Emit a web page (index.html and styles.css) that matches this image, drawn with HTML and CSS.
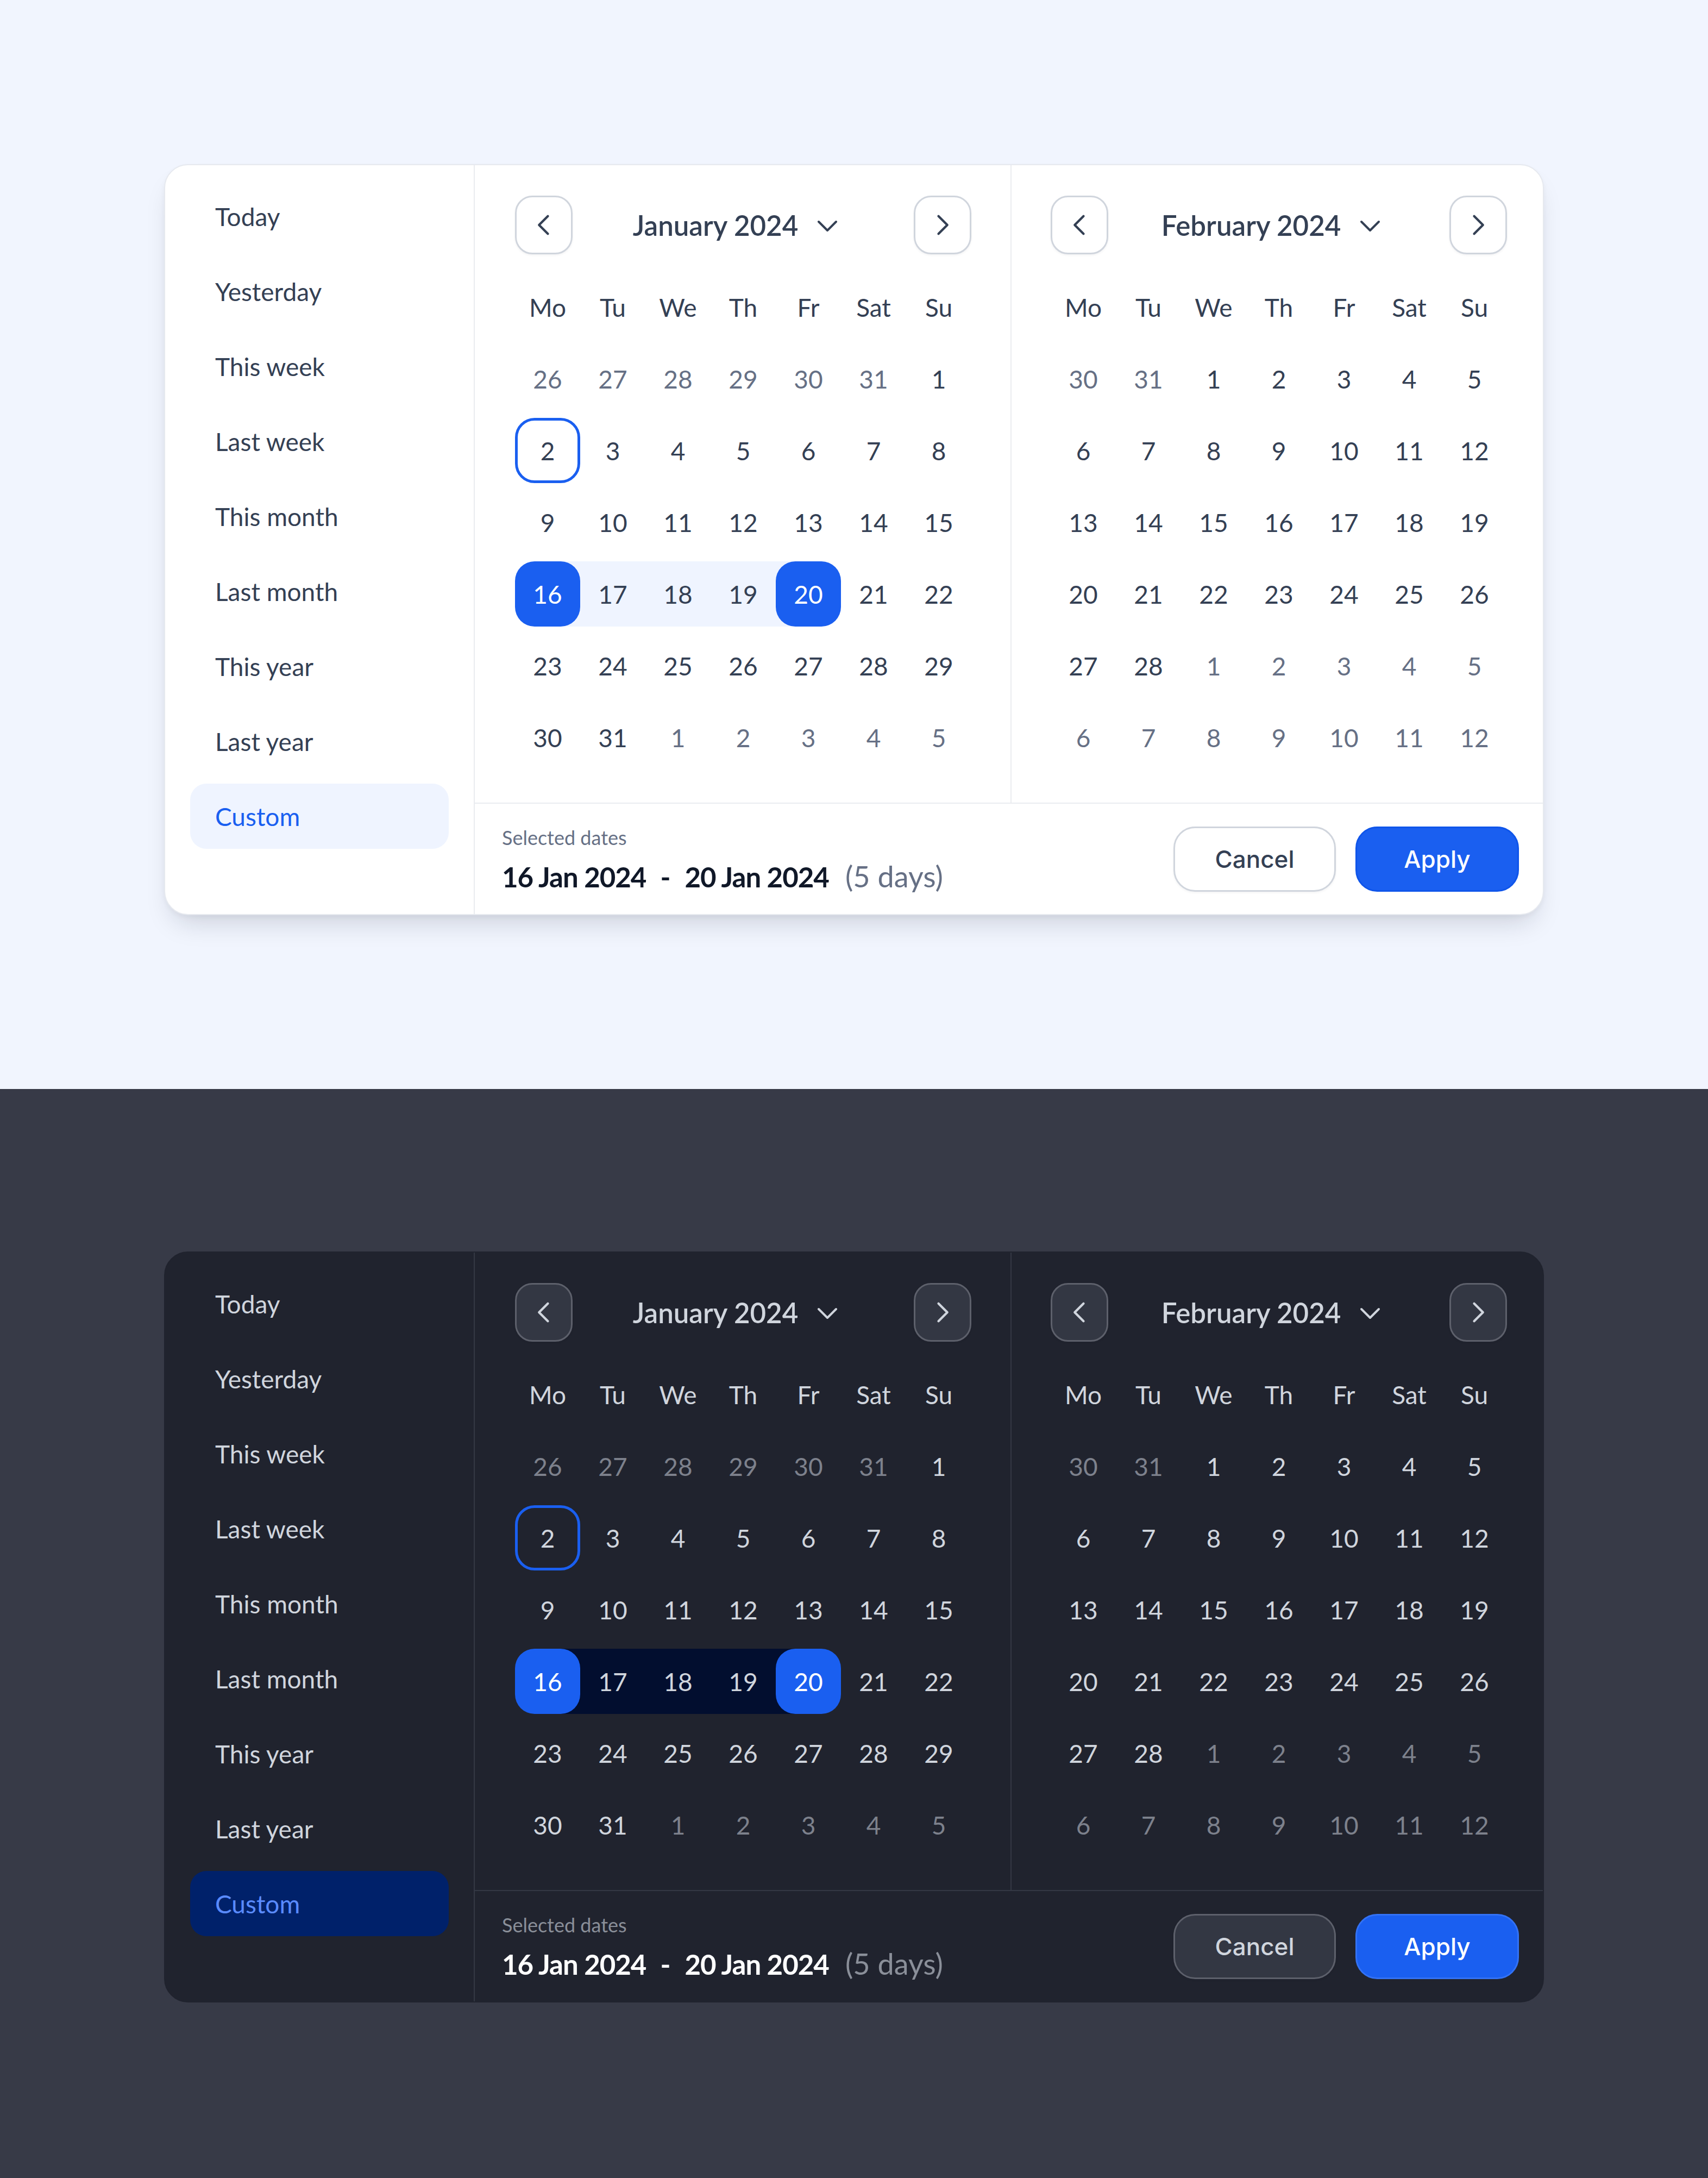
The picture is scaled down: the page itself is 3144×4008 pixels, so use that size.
FILE: index.html
```html
<!DOCTYPE html>
<html lang="en">
<head>
<meta charset="utf-8">
<title>Date range picker</title>
<link rel="stylesheet" href="styles.css">
</head>
<body>

<section class="theme light">
  <div class="picker">
    <nav class="presets">
      <div class="preset">Today</div>
      <div class="preset">Yesterday</div>
      <div class="preset">This week</div>
      <div class="preset">Last week</div>
      <div class="preset">This month</div>
      <div class="preset">Last month</div>
      <div class="preset">This year</div>
      <div class="preset">Last year</div>
      <div class="preset active">Custom</div>
    </nav>
    <div class="main">
      <div class="months">
        <div class="month">
          <div class="month-nav">
            <button class="nav-btn"><svg viewBox="0 0 24 24" width="60" height="60"><path d="M15 5.5 8.5 12 15 18.5"/></svg></button>
            <div class="month-title">January 2024<svg class="caret" viewBox="0 0 40 24" width="40" height="24"><path d="M4 4 20 20 36 4"/></svg></div>
            <button class="nav-btn"><svg viewBox="0 0 24 24" width="60" height="60"><path d="M9 5.5 15.5 12 9 18.5"/></svg></button>
          </div>
          <div class="grid">
            <span class="wd">Mo</span><span class="wd">Tu</span><span class="wd">We</span><span class="wd">Th</span><span class="wd">Fr</span><span class="wd">Sat</span><span class="wd">Su</span>
            <span class="c m">26</span><span class="c m">27</span><span class="c m">28</span><span class="c m">29</span><span class="c m">30</span><span class="c m">31</span><span class="c">1</span>
            <span class="c today">2</span><span class="c">3</span><span class="c">4</span><span class="c">5</span><span class="c">6</span><span class="c">7</span><span class="c">8</span>
            <span class="c">9</span><span class="c">10</span><span class="c">11</span><span class="c">12</span><span class="c">13</span><span class="c">14</span><span class="c">15</span>
            <span class="c rs"><b>16</b></span><span class="c rm">17</span><span class="c rm">18</span><span class="c rm">19</span><span class="c re"><b>20</b></span><span class="c">21</span><span class="c">22</span>
            <span class="c">23</span><span class="c">24</span><span class="c">25</span><span class="c">26</span><span class="c">27</span><span class="c">28</span><span class="c">29</span>
            <span class="c">30</span><span class="c">31</span><span class="c m">1</span><span class="c m">2</span><span class="c m">3</span><span class="c m">4</span><span class="c m">5</span>
          </div>
        </div>
        <div class="month">
          <div class="month-nav">
            <button class="nav-btn"><svg viewBox="0 0 24 24" width="60" height="60"><path d="M15 5.5 8.5 12 15 18.5"/></svg></button>
            <div class="month-title">February 2024<svg class="caret" viewBox="0 0 40 24" width="40" height="24"><path d="M4 4 20 20 36 4"/></svg></div>
            <button class="nav-btn"><svg viewBox="0 0 24 24" width="60" height="60"><path d="M9 5.5 15.5 12 9 18.5"/></svg></button>
          </div>
          <div class="grid">
            <span class="wd">Mo</span><span class="wd">Tu</span><span class="wd">We</span><span class="wd">Th</span><span class="wd">Fr</span><span class="wd">Sat</span><span class="wd">Su</span>
            <span class="c m">30</span><span class="c m">31</span><span class="c">1</span><span class="c">2</span><span class="c">3</span><span class="c">4</span><span class="c">5</span>
            <span class="c">6</span><span class="c">7</span><span class="c">8</span><span class="c">9</span><span class="c">10</span><span class="c">11</span><span class="c">12</span>
            <span class="c">13</span><span class="c">14</span><span class="c">15</span><span class="c">16</span><span class="c">17</span><span class="c">18</span><span class="c">19</span>
            <span class="c">20</span><span class="c">21</span><span class="c">22</span><span class="c">23</span><span class="c">24</span><span class="c">25</span><span class="c">26</span>
            <span class="c">27</span><span class="c">28</span><span class="c m">1</span><span class="c m">2</span><span class="c m">3</span><span class="c m">4</span><span class="c m">5</span>
            <span class="c m">6</span><span class="c m">7</span><span class="c m">8</span><span class="c m">9</span><span class="c m">10</span><span class="c m">11</span><span class="c m">12</span>
          </div>
        </div>
      </div>
      <footer class="footer">
        <div class="summary">
          <div class="label">Selected dates</div>
          <div class="range-text"><strong>16 Jan 2024</strong><span class="dash">-</span><strong>20 Jan 2024</strong><span class="days">(5 days)</span></div>
        </div>
        <div class="actions">
          <button class="btn cancel">Cancel</button>
          <button class="btn apply">Apply</button>
        </div>
      </footer>
    </div>
  </div>
</section>

<section class="theme dark">
  <div class="picker">
    <nav class="presets">
      <div class="preset">Today</div>
      <div class="preset">Yesterday</div>
      <div class="preset">This week</div>
      <div class="preset">Last week</div>
      <div class="preset">This month</div>
      <div class="preset">Last month</div>
      <div class="preset">This year</div>
      <div class="preset">Last year</div>
      <div class="preset active">Custom</div>
    </nav>
    <div class="main">
      <div class="months">
        <div class="month">
          <div class="month-nav">
            <button class="nav-btn"><svg viewBox="0 0 24 24" width="60" height="60"><path d="M15 5.5 8.5 12 15 18.5"/></svg></button>
            <div class="month-title">January 2024<svg class="caret" viewBox="0 0 40 24" width="40" height="24"><path d="M4 4 20 20 36 4"/></svg></div>
            <button class="nav-btn"><svg viewBox="0 0 24 24" width="60" height="60"><path d="M9 5.5 15.5 12 9 18.5"/></svg></button>
          </div>
          <div class="grid">
            <span class="wd">Mo</span><span class="wd">Tu</span><span class="wd">We</span><span class="wd">Th</span><span class="wd">Fr</span><span class="wd">Sat</span><span class="wd">Su</span>
            <span class="c m">26</span><span class="c m">27</span><span class="c m">28</span><span class="c m">29</span><span class="c m">30</span><span class="c m">31</span><span class="c">1</span>
            <span class="c today">2</span><span class="c">3</span><span class="c">4</span><span class="c">5</span><span class="c">6</span><span class="c">7</span><span class="c">8</span>
            <span class="c">9</span><span class="c">10</span><span class="c">11</span><span class="c">12</span><span class="c">13</span><span class="c">14</span><span class="c">15</span>
            <span class="c rs"><b>16</b></span><span class="c rm">17</span><span class="c rm">18</span><span class="c rm">19</span><span class="c re"><b>20</b></span><span class="c">21</span><span class="c">22</span>
            <span class="c">23</span><span class="c">24</span><span class="c">25</span><span class="c">26</span><span class="c">27</span><span class="c">28</span><span class="c">29</span>
            <span class="c">30</span><span class="c">31</span><span class="c m">1</span><span class="c m">2</span><span class="c m">3</span><span class="c m">4</span><span class="c m">5</span>
          </div>
        </div>
        <div class="month">
          <div class="month-nav">
            <button class="nav-btn"><svg viewBox="0 0 24 24" width="60" height="60"><path d="M15 5.5 8.5 12 15 18.5"/></svg></button>
            <div class="month-title">February 2024<svg class="caret" viewBox="0 0 40 24" width="40" height="24"><path d="M4 4 20 20 36 4"/></svg></div>
            <button class="nav-btn"><svg viewBox="0 0 24 24" width="60" height="60"><path d="M9 5.5 15.5 12 9 18.5"/></svg></button>
          </div>
          <div class="grid">
            <span class="wd">Mo</span><span class="wd">Tu</span><span class="wd">We</span><span class="wd">Th</span><span class="wd">Fr</span><span class="wd">Sat</span><span class="wd">Su</span>
            <span class="c m">30</span><span class="c m">31</span><span class="c">1</span><span class="c">2</span><span class="c">3</span><span class="c">4</span><span class="c">5</span>
            <span class="c">6</span><span class="c">7</span><span class="c">8</span><span class="c">9</span><span class="c">10</span><span class="c">11</span><span class="c">12</span>
            <span class="c">13</span><span class="c">14</span><span class="c">15</span><span class="c">16</span><span class="c">17</span><span class="c">18</span><span class="c">19</span>
            <span class="c">20</span><span class="c">21</span><span class="c">22</span><span class="c">23</span><span class="c">24</span><span class="c">25</span><span class="c">26</span>
            <span class="c">27</span><span class="c">28</span><span class="c m">1</span><span class="c m">2</span><span class="c m">3</span><span class="c m">4</span><span class="c m">5</span>
            <span class="c m">6</span><span class="c m">7</span><span class="c m">8</span><span class="c m">9</span><span class="c m">10</span><span class="c m">11</span><span class="c m">12</span>
          </div>
        </div>
      </div>
      <footer class="footer">
        <div class="summary">
          <div class="label">Selected dates</div>
          <div class="range-text"><strong>16 Jan 2024</strong><span class="dash">-</span><strong>20 Jan 2024</strong><span class="days">(5 days)</span></div>
        </div>
        <div class="actions">
          <button class="btn cancel">Cancel</button>
          <button class="btn apply">Apply</button>
        </div>
      </footer>
    </div>
  </div>
</section>

</body>
</html>
```

FILE: styles.css
```css
* { box-sizing: border-box; }

html, body {
  margin: 0;
  padding: 0;
}

body {
  font-family: "Lato", "Noto Sans", "DejaVu Sans", sans-serif;
}

.theme {
  height: 2004px;
  padding-top: 302px;
  display: flex;
  justify-content: center;
  align-items: flex-start;
  background: var(--page);
}

.light {
  --page: #F1F5FE;
  --card: #FFFFFF;
  --card-border: #E6E9EF;
  --line: #EAECF0;
  --text: #344054;
  --muted: #667085;
  --strong: #101828;
  --label: #667085;
  --nav-bg: #FFFFFF;
  --nav-border: #D0D5DD;
  --range: #EFF4FF;
  --active-bg: #EFF4FF;
  --active-text: #1A5FF0;
  --blue: #1A5FF0;
  --apply-border: #0F55EA;
  --cancel-bg: #FFFFFF;
  --cancel-text: #344054;
  --shadow: 0 28px 50px -18px rgba(16, 24, 40, 0.18), 0 4px 10px rgba(16, 24, 40, 0.04);
}

.dark {
  --page: #373A47;
  --card: #20232E;
  --card-border: #20232E;
  --line: #343844;
  --text: #D0D5DD;
  --muted: #7D818C;
  --strong: #FFFFFF;
  --label: #8A8F99;
  --nav-bg: #333743;
  --nav-border: #5D606B;
  --range: #020E2F;
  --active-bg: #00216A;
  --active-text: #5A8BFF;
  --blue: #1A5FF0;
  --apply-border: #3372F5;
  --cancel-bg: #333743;
  --cancel-text: #D0D5DD;
  --shadow: none;
  padding-top: 299px;
}

.picker {
  width: 2540px;
  height: 1382px;
  background: var(--card);
  border: 2px solid var(--card-border);
  border-radius: 44px;
  box-shadow: var(--shadow);
  display: flex;
  overflow: hidden;
}

/* presets sidebar */
.presets {
  width: 570px;
  flex: none;
  border-right: 2px solid var(--line);
  padding: 34px 46px;
  display: flex;
  flex-direction: column;
  gap: 18px;
}

.preset {
  height: 120px;
  display: flex;
  align-items: center;
  padding-left: 46px;
  border-radius: 30px;
  font-size: 46px;
  color: var(--text);
}

.preset.active {
  background: var(--active-bg);
  color: var(--active-text);
}

/* main area */
.main {
  flex: 1;
  display: flex;
  flex-direction: column;
}

.months {
  display: flex;
  border-bottom: 2px solid var(--line);
}

.month {
  flex: 1;
  padding: 56px 72px 60px 74px;
}

.month + .month {
  border-left: 2px solid var(--line);
  padding-left: 72px;
}

.month-nav {
  height: 108px;
  display: flex;
  align-items: center;
  justify-content: space-between;
  margin-bottom: 37px;
}

.nav-btn {
  width: 106px;
  height: 108px;
  padding: 0;
  border: 3px solid var(--nav-border);
  border-radius: 32px;
  background: var(--nav-bg);
  box-shadow: 0 2px 4px rgba(16, 24, 40, 0.05);
  display: flex;
  align-items: center;
  justify-content: center;
}

.nav-btn svg path,
.caret path {
  fill: none;
  stroke: var(--text);
  stroke-linecap: round;
  stroke-linejoin: round;
}

.nav-btn svg path { stroke-width: 1.7; }
.caret path { stroke-width: 4; }

.month-title {
  display: flex;
  align-items: center;
  gap: 34px;
  font-size: 51px;
  font-weight: 600;
  color: var(--text);
  margin-right: 28px;
}

.caret { margin-top: 4px; }

.grid {
  display: grid;
  grid-template-columns: repeat(7, 120px);
  grid-auto-rows: 120px;
  row-gap: 12px;
}

.wd,
.c {
  display: flex;
  align-items: center;
  justify-content: center;
  font-size: 46px;
  color: var(--text);
}

.c.m { color: var(--muted); }

.c.today {
  border: 5px solid var(--blue);
  border-radius: 36px;
}

.c.rm { background: var(--range); }

.c.rs { background: linear-gradient(90deg, transparent 50%, var(--range) 50%); }
.c.re { background: linear-gradient(90deg, var(--range) 50%, transparent 50%); }

.c.rs b,
.c.re b {
  width: 100%;
  height: 100%;
  display: flex;
  align-items: center;
  justify-content: center;
  font-weight: 400;
  background: var(--blue);
  color: #FFFFFF;
  border-radius: 36px;
}

/* footer */
.footer {
  flex: 1;
  display: flex;
  align-items: center;
  justify-content: space-between;
  padding: 0 50px 0 50px;
}

.label {
  font-size: 36px;
  line-height: 44px;
  color: var(--label);
  margin-bottom: 22px;
}

.range-text {
  display: flex;
  align-items: baseline;
  font-size: 51px;
  line-height: 56px;
}

.range-text strong {
  font-weight: 700;
  color: var(--strong);
  letter-spacing: -1px;
}

.dash {
  color: var(--strong);
  margin: 0 26px;
  font-weight: 700;
}

.days {
  margin-left: 30px;
  font-size: 54px;
  color: var(--label);
}

.actions {
  display: flex;
  gap: 36px;
}

.btn {
  height: 120px;
  border-radius: 40px;
  font-family: "Inter", "Lato", sans-serif;
  font-size: 44px;
  font-weight: 500;
  border: 3px solid;
  padding: 0;
}

.btn.cancel {
  width: 299px;
  background: var(--cancel-bg);
  border-color: var(--nav-border);
  color: var(--cancel-text);
  box-shadow: 0 2px 4px rgba(16, 24, 40, 0.05);
}

.btn.apply {
  width: 301px;
  background: var(--blue);
  border-color: var(--apply-border);
  color: #FFFFFF;
}
```
